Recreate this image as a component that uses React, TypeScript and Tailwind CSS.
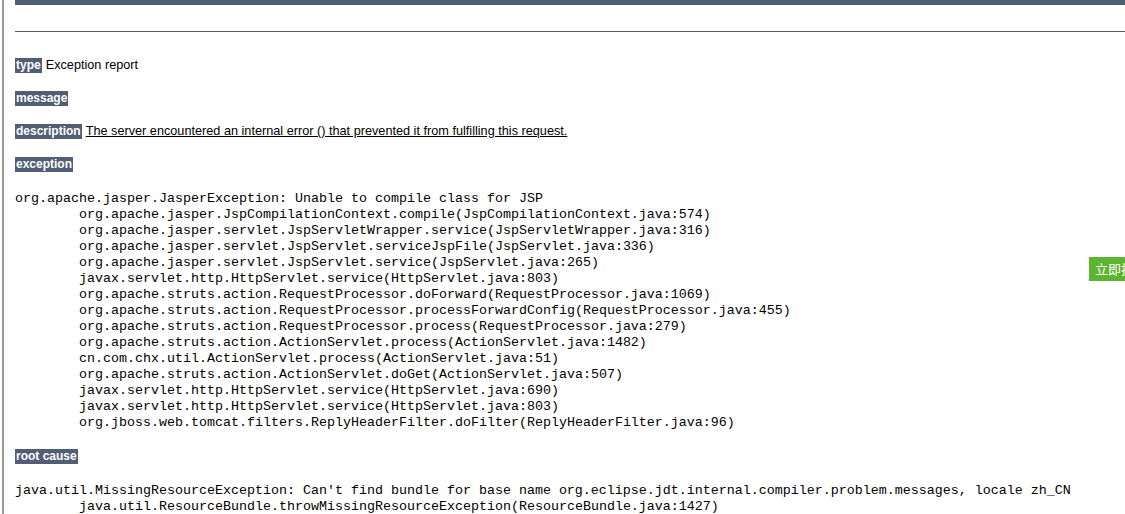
import React from 'react';

const trace = [
  'org.apache.jasper.JasperException: Unable to compile class for JSP',
  '\torg.apache.jasper.JspCompilationContext.compile(JspCompilationContext.java:574)',
  '\torg.apache.jasper.servlet.JspServletWrapper.service(JspServletWrapper.java:316)',
  '\torg.apache.jasper.servlet.JspServlet.serviceJspFile(JspServlet.java:336)',
  '\torg.apache.jasper.servlet.JspServlet.service(JspServlet.java:265)',
  '\tjavax.servlet.http.HttpServlet.service(HttpServlet.java:803)',
  '\torg.apache.struts.action.RequestProcessor.doForward(RequestProcessor.java:1069)',
  '\torg.apache.struts.action.RequestProcessor.processForwardConfig(RequestProcessor.java:455)',
  '\torg.apache.struts.action.RequestProcessor.process(RequestProcessor.java:279)',
  '\torg.apache.struts.action.ActionServlet.process(ActionServlet.java:1482)',
  '\tcn.com.chx.util.ActionServlet.process(ActionServlet.java:51)',
  '\torg.apache.struts.action.ActionServlet.doGet(ActionServlet.java:507)',
  '\tjavax.servlet.http.HttpServlet.service(HttpServlet.java:690)',
  '\tjavax.servlet.http.HttpServlet.service(HttpServlet.java:803)',
  '\torg.jboss.web.tomcat.filters.ReplyHeaderFilter.doFilter(ReplyHeaderFilter.java:96)',
];

const rootCause = [
  "java.util.MissingResourceException: Can't find bundle for base name org.eclipse.jdt.internal.compiler.problem.messages, locale zh_CN",
  '\tjava.util.ResourceBundle.throwMissingResourceException(ResourceBundle.java:1427)',
];

const Label: React.FC<{ text: string }> = ({ text }) => (
  <span className="inline-block bg-[#525D76] text-white text-[12px] font-bold px-[1px] h-[15px] leading-[15px]">{text}</span>
);

const Row: React.FC<{ label: string; children?: React.ReactNode; className?: string }> = ({ label, children, className }) => (
  <div className={`flex items-center gap-[4px] h-[15px] ${className ?? ''}`}>
    <Label text={label} />
    {children}
  </div>
);

const Pre: React.FC<{ lines: string[]; className?: string }> = ({ lines, className }) => (
  <pre
    className={`whitespace-pre text-black text-[13.33px] leading-[16px] ${className ?? ''}`}
    style={{ fontFamily: '"Liberation Mono", "Courier New", monospace', tabSize: 8 }}
  >
    {lines.join('\n')}
  </pre>
);

export default function App() {
  return (
    <div
      className="relative w-[1125px] h-[514px] overflow-hidden bg-white flex pl-[2px]"
      style={{ fontFamily: '"Liberation Sans", Arial, sans-serif' }}
    >
      <div className="w-[2px] h-full bg-[#9a9a9a]" />
      <div className="flex-1 pl-[11px] text-[12.7px] text-black">
        <div className="h-[5px] bg-[#525D76]" />
        <div className="mt-[26px] h-px bg-[#525D76]" />
        <Row label="type" className="mt-[26px]">
          <span>Exception report</span>
        </Row>
        <Row label="message" className="mt-[18px]" />
        <Row label="description" className="mt-[18px]">
          <span className="underline">The server encountered an internal error () that prevented it from fulfilling this request.</span>
        </Row>
        <Row label="exception" className="mt-[18px]" />
        <Pre lines={trace} className="mt-[19px]" />
        <Row label="root cause" className="mt-[18px]" />
        <Pre lines={rootCause} className="mt-[19px]" />
      </div>
      <div
        className="absolute left-[1089px] top-[257px] h-[24px] w-[60px] bg-[#5cb531] text-white text-[13px] leading-[24px] pl-[6px] whitespace-nowrap"
        style={{ fontFamily: '"Noto Sans CJK SC", sans-serif' }}
      >
        立即抢购
      </div>
    </div>
  );
}
